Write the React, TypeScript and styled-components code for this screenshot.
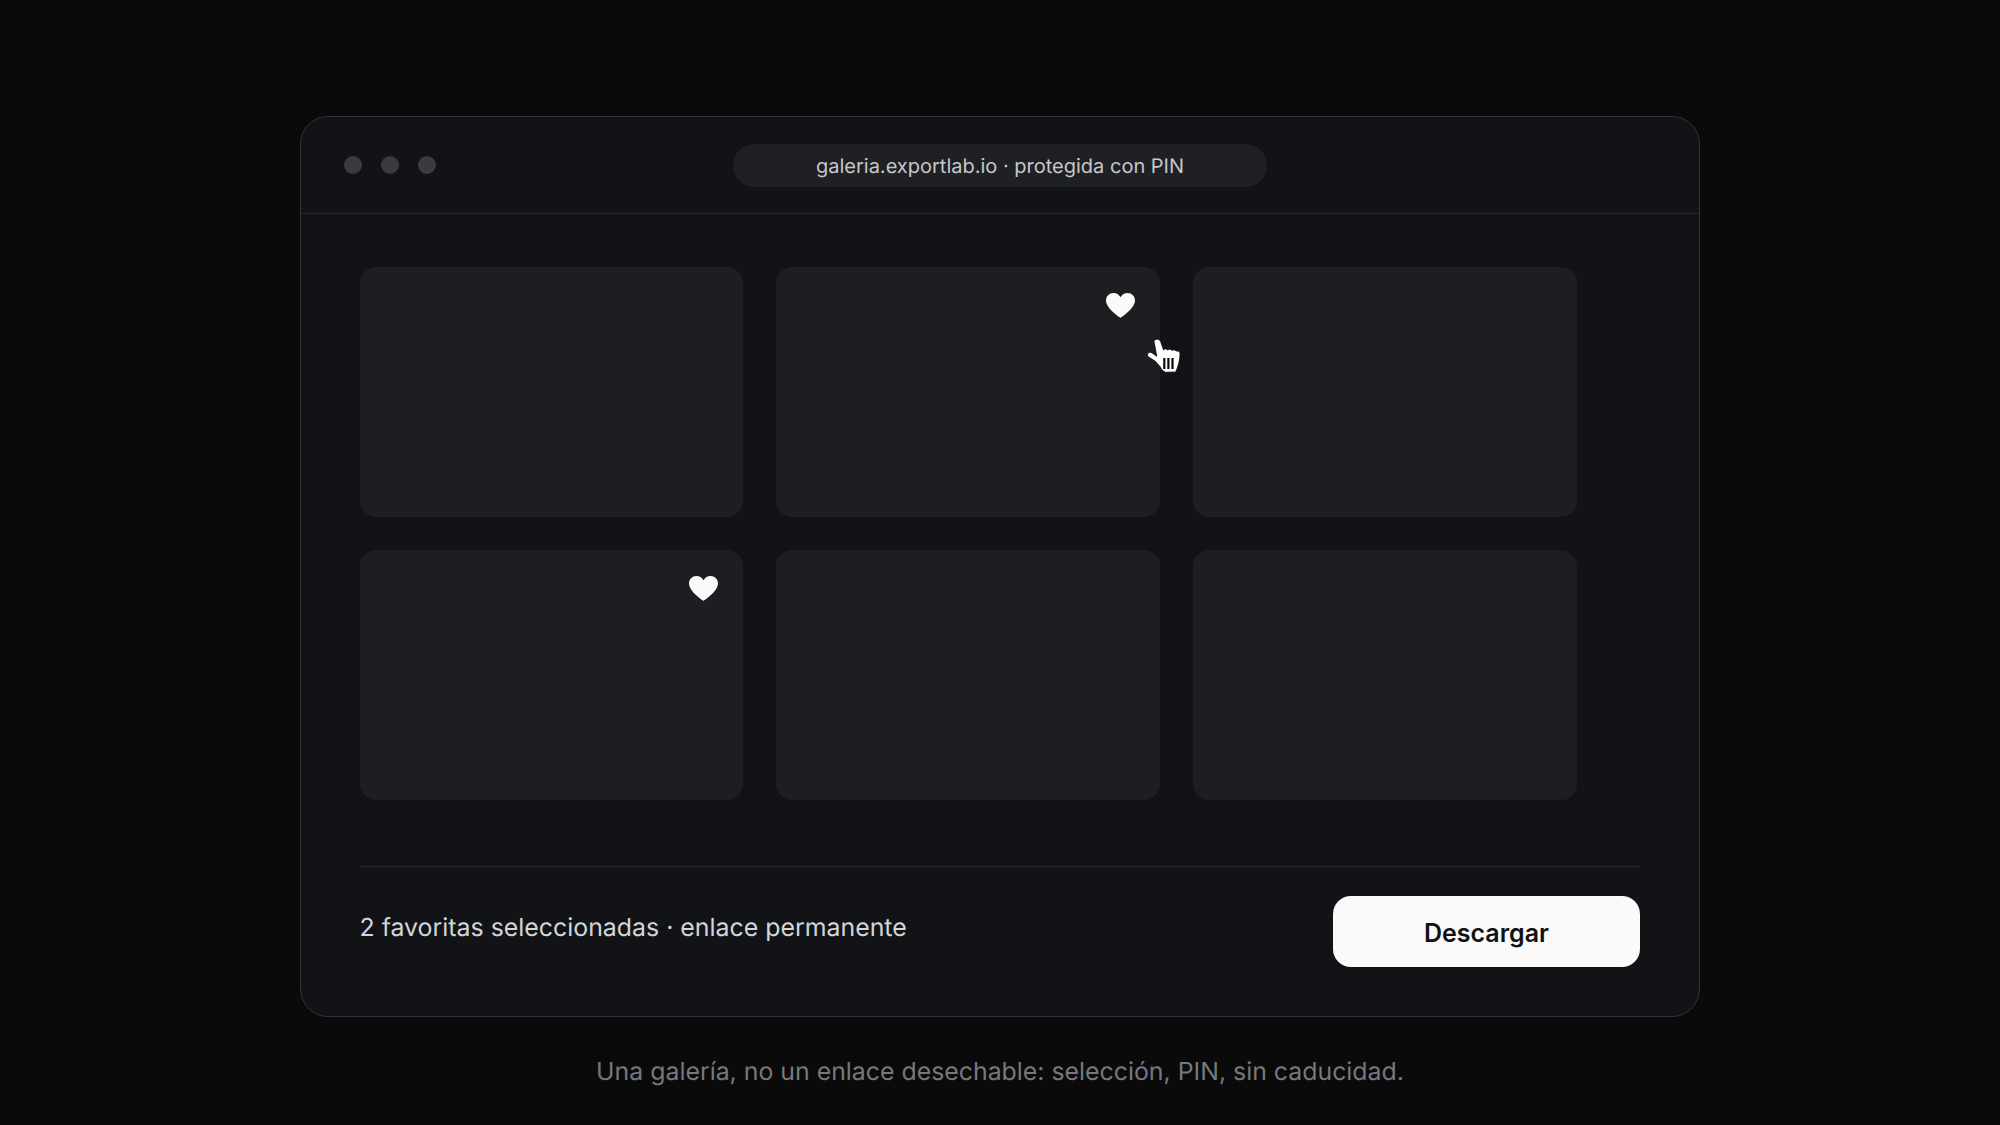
import React from "react";
import styled, { createGlobalStyle } from "styled-components";

const Global = createGlobalStyle`
  html, body { margin: 0; padding: 0; background: #0a0a0b; }
  body { font-family: Inter, "Liberation Sans", sans-serif; text-rendering: geometricPrecision; }
  * { box-sizing: border-box; }
`;

const Page = styled.main`
  width: 2000px;
  height: 1125px;
  padding-top: 116px;
  display: flex;
  flex-direction: column;
  align-items: center;
  background: #0a0a0b;
`;

const Frame = styled.section`
  width: 1400px;
  height: 901px;
  border: 1.5px solid #323337;
  border-radius: 28px;
  background: #121317;
  display: flex;
  flex-direction: column;
`;

const TitleBar = styled.header`
  position: relative;
  height: 97px;
  flex: none;
  display: flex;
  align-items: center;
  justify-content: center;
  border-bottom: 1.5px solid #26272a;
`;

const Dots = styled.div`
  position: absolute;
  left: 43px;
  top: 39px;
  display: flex;
  gap: 18.8px;
`;

const Dot = styled.span`
  width: 18px;
  height: 18px;
  border-radius: 50%;
  background: #3a3b3f;
`;

const Address = styled.div`
  width: 534px;
  height: 43px;
  padding-top: 2px;
  border-radius: 22px;
  background: #1f2024;
  color: #c6c7ca;
  font-size: 20px;
  display: flex;
  align-items: center;
  justify-content: center;
`;

const Body = styled.div`
  flex: 1;
  padding: 53px 59.5px 0 58.5px;
  display: flex;
  flex-direction: column;
`;

const Grid = styled.div`
  display: grid;
  grid-template-columns: repeat(3, 383.5px);
  grid-auto-rows: 250px;
  gap: 33px 33.3px;
`;

const Tile = styled.div`
  position: relative;
  border-radius: 16px;
  background: #1d1e22;
`;

const HeartMark = styled.svg`
  position: absolute;
  top: 26px;
  right: 25px;
  width: 29px;
  height: 25px;
`;

const Pointer = styled.svg`
  position: absolute;
  left: 363px;
  top: 63px;
  width: 48px;
  height: 48px;
`;

const Footer = styled.footer`
  margin-top: 66px;
  border-top: 1.5px solid #26272a;
  padding-top: 29px;
  display: flex;
  align-items: flex-start;
  justify-content: space-between;
`;

const Summary = styled.p`
  margin: 14px 0 0;
  color: #d4d5d6;
  font-size: 24.88px;
  line-height: 36px;
`;

const Download = styled.button`
  width: 307px;
  height: 71px;
  padding: 2px 0 0 1px;
  border: 0;
  border-radius: 18px;
  background: #fafafa;
  color: #111214;
  font: 600 25px Inter, "Liberation Sans", sans-serif;
`;

const Caption = styled.p`
  margin: 36px 0 0;
  color: #77787b;
  font-size: 24.85px;
  line-height: 36px;
`;

const Heart = () => (
  <HeartMark viewBox="0 0 29 25" aria-hidden="true">
    <path
      fill="#fafafa"
      d="M14.5 25C13.9 24.6 0 15.6 0 7.6 0 3.2 3.3 0 7.4 0c3 0 5.6 1.6 7.1 4.2C16 1.6 18.6 0 21.6 0 25.7 0 29 3.2 29 7.6 29 15.6 15.1 24.6 14.5 25Z"
    />
  </HeartMark>
);

const Hand = () => (
  <Pointer viewBox="0 0 48 48" aria-hidden="true">
    <path
      fill="#fff"
      stroke="#0c0c0d"
      strokeWidth="0.8"
      strokeLinejoin="round"
      d="M15 11.500c.2-2.500 5-3.500 6.500-.2L24.500 20c1.200-1.500 3-1.500 4.200 0 1.200-1.200 3.200-1.200 4.300.5 1.400-1 3.300-.8 4.200.6 1.800-.6 3.800.3 3.800 2.400 0 4.500-.8 8.500-2 12.500l-2.200 6-10.300.3-3.500-2.300-2-3.500-5-5.500-6.500-4c-1.200-1-1.400-2.800-.4-3.900 1-1.100 2.700-1.100 3.900-.2l4.800 3.400Z"
    />
    <path stroke="#0c0c0d" strokeWidth="2.200" d="M25.300 28v11M29.400 28v11M33.500 28v11" />
  </Pointer>
);

const tiles = [false, true, false, true, false, false];

export default function App() {
  return (
    <Page>
      <Global />
      <Frame>
        <TitleBar>
          <Dots>
            <Dot />
            <Dot />
            <Dot />
          </Dots>
          <Address>galeria.exportlab.io · protegida con PIN</Address>
        </TitleBar>
        <Body>
          <Grid>
            {tiles.map((liked, i) => (
              <Tile key={i}>
                {liked && <Heart />}
                {i === 1 && <Hand />}
              </Tile>
            ))}
          </Grid>
          <Footer>
            <Summary>2 favoritas seleccionadas · enlace permanente</Summary>
            <Download>Descargar</Download>
          </Footer>
        </Body>
      </Frame>
      <Caption>Una galería, no un enlace desechable: selección, PIN, sin caducidad.</Caption>
    </Page>
  );
}
